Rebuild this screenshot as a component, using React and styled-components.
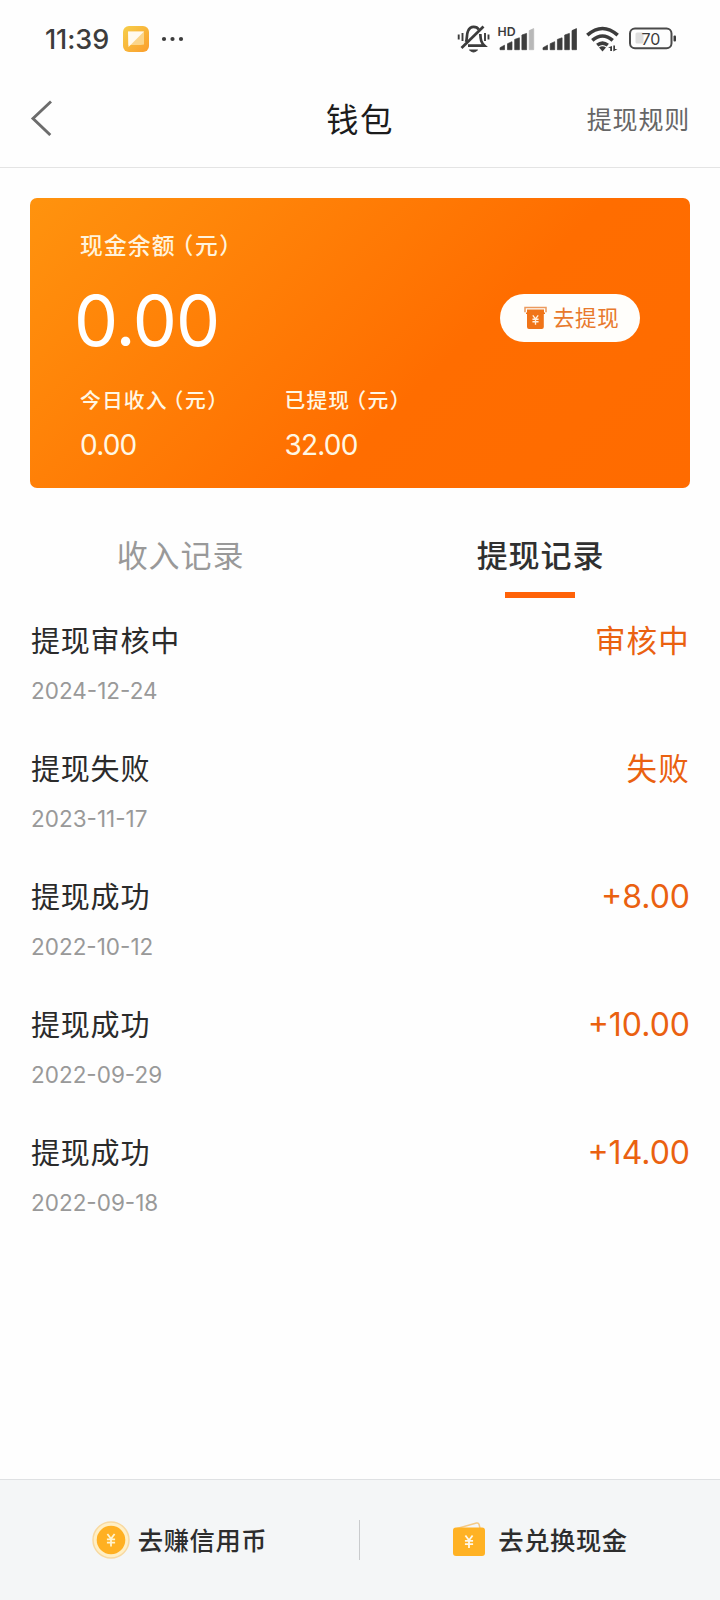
import React from "react";
import styled, { createGlobalStyle } from "styled-components";

const GlobalStyle = createGlobalStyle`
  * { box-sizing: border-box; }
  body {
    margin: 0;
    background: #fefefe;
    font-family: Inter, "Noto Sans CJK SC", sans-serif;
    color: #2b2b2b;
  }
`;

const Screen = styled.main`
  width: 720px;
  height: 1600px;
  display: flex;
  flex-direction: column;
  overflow: hidden;
`;

const StatusBar = styled.div`
  height: 78px;
  padding: 0 43px 0 45px;
  display: flex;
  align-items: center;
  justify-content: space-between;
`;

const StatusGroup = styled.div`
  display: flex;
  align-items: center;
`;

const Time = styled.span`
  width: 78px;
  padding-top: 2px;
  font-size: 27px;
  line-height: 32px;
  font-weight: 500;
  letter-spacing: -0.1px;
  color: #3c3c3c;
`;

const Dots = styled.svg`
  margin-left: 12px;
`;

const Header = styled.header`
  height: 90px;
  padding: 0 30px;
  display: grid;
  grid-template-columns: 1fr auto 1fr;
  align-items: center;
  border-bottom: 1px solid #e4e4e4;
`;

const Title = styled.h1`
  margin: 0 0 4px;
  font-size: 32.5px;
  line-height: 44px;
  font-weight: 400;
  letter-spacing: 1.5px;
  color: #1c1c1c;
`;

const RulesLink = styled.a`
  margin-bottom: 6px;
  justify-self: end;
  font-size: 25px;
  line-height: 36px;
  letter-spacing: 0.8px;
  color: #666;
`;

const BackButton = styled.button`
  margin: 0 0 9px;
  padding: 0;
  border: 0;
  background: none;
  width: 24px;
  height: 36px;
`;

const Card = styled.section`
  margin: 30px 30px 0;
  height: 290px;
  padding: 30px 50px 0;
  border-radius: 7px;
  color: #fff;
  background: linear-gradient(135deg, #ff930e 0%, #ff6d00 61%, #ff6b00 100%);
`;

const CardLabel = styled.div`
  font-size: ${(p) => (p.$small ? 20.8 : 22.8)}px;
  line-height: 36px;
  font-weight: 500;
  letter-spacing: 1.1px;
  color: ${(p) => (p.$small ? "#fff7e4" : "#fff3dc")};
  white-space: nowrap;
`;

const Unit = styled.span`
  margin-left: -5px;
  letter-spacing: 1.5px;
`;

const BalanceRow = styled.div`
  height: 88px;
  margin-top: 6px;
  display: flex;
  align-items: center;
  justify-content: space-between;
`;

const Balance = styled.div`
  margin: 13px 0 0 -6px;
  font-size: 70px;
  line-height: 84px;
  letter-spacing: -1px;
`;

const WithdrawButton = styled.button`
  width: 140px;
  height: 48px;
  margin: 8px 0 0;
  padding: 0 0 0 24px;
  border: 0;
  border-radius: 24px;
  background: #fffefb;
  display: flex;
  align-items: center;
  gap: 6px;
  font: 400 21.5px/32px Inter, "Noto Sans CJK SC", sans-serif;
  letter-spacing: 0.6px;
  color: #e8792c;
`;

const Stats = styled.div`
  display: grid;
  grid-template-columns: 204.5px auto;
  justify-content: start;
  margin-top: 25px;
`;

const StatValue = styled.div`
  font-size: 28px;
  line-height: 34px;
  margin-top: 9px;
  letter-spacing: -0.8px;
  color: #fff7e4;
`;

const Tabs = styled.nav`
  height: 110px;
  padding-top: 45px;
  display: grid;
  grid-template-columns: 1fr 1fr;
`;

const Tab = styled.a`
  display: flex;
  flex-direction: column;
  align-items: center;
  font-size: 31px;
  line-height: 46px;
  letter-spacing: 0.9px;
  font-weight: ${(p) => (p.$active ? 500 : 400)};
  color: ${(p) => (p.$active ? "#303030" : "#999")};

  &::after {
    content: "";
    width: 70px;
    height: 6px;
    margin-top: 13px;
    background: ${(p) => (p.$active ? "#ff6208" : "transparent")};
  }
`;

const TabLabel = styled.span`
  padding-left: 1px;
`;

const Records = styled.ul`
  list-style: none;
  margin: 0;
  padding: 20px 30px 0 31px;
  flex: 1;
`;

const Record = styled.li`
  height: 128px;
  display: flex;
  justify-content: space-between;
`;

const RecordTitle = styled.div`
  padding-top: 2px;
  font-size: 29px;
  line-height: 44px;
  letter-spacing: 0.8px;
`;

const RecordDate = styled.div`
  margin-top: 13px;
  font-size: 22.5px;
  line-height: 28px;
  color: #999;
`;

const Amount = styled.div`
  font-size: ${(p) => (p.$text ? 30.5 : 32)}px;
  line-height: 46px;
  letter-spacing: ${(p) => (p.$text ? 1.2 : 0)}px;
  color: #ea6110;
`;

const Footer = styled.footer`
  height: 121px;
  border-top: 1px solid #dfe1e3;
  background: #f4f6f7;
  display: grid;
  grid-template-columns: 359px 1px 360px;
  align-items: center;
`;

const FooterAction = styled.a`
  display: flex;
  align-items: center;
  justify-content: center;
  gap: ${(p) => p.$gap}px;
  font-size: 25.3px;
  line-height: 38px;
  font-weight: 500;
  letter-spacing: 0.6px;
  color: #2d2d2d;
`;

const FooterLabel = styled.span`
  padding-top: 2px;
`;

const Divider = styled.i`
  width: 1px;
  height: 40px;
  background: #c9cbcd;
`;

const AppIcon = () => (
  <svg width="26" height="26" viewBox="0 0 26 26">
    <defs>
      <linearGradient id="note" x1="0" y1="0" x2="1" y2="1">
        <stop offset="0" stopColor="#f6cf4a" />
        <stop offset="1" stopColor="#fb9d2c" />
      </linearGradient>
    </defs>
    <rect width="26" height="26" rx="6" fill="url(#note)" />
    <path d="M5 5.500h16v13L17.500 19H5z" fill="#fbd58a" />
    <path d="M5 5.500h16L5.500 21z" fill="#fffaf0" />
  </svg>
);

const MoreDots = () => (
  <Dots width="24" height="6" viewBox="0 0 24 6" fill="#3c3c3c">
    <circle cx="3" cy="3" r="2.1" />
    <circle cx="11.500" cy="3" r="2.1" />
    <circle cx="20" cy="3" r="2.1" />
  </Dots>
);

const StatusIcons = () => (
  <svg width="220" height="32" viewBox="457 23 220 32" fill="#3c3c3c">
    <g fill="none" stroke="#3c3c3c" strokeWidth="2.700">
      <path d="M466 42c1.200-3 .6-8 2-11 1.200-2.800 3-4.200 5.600-4.200 2.400 0 4.200 1 5.200 2.800M480.300 34c.3 6 .8 8.500 4.200 11.700H468" />
      <path d="M483.500 26.500L461.500 48" />
      <path d="M469.500 50q4 4 8 0z" fill="#3c3c3c" strokeWidth="1" />
      <path d="M458.700 34.500v5M462.500 33v8M485 33v8M488.500 34.500v5" strokeWidth="1.900" />
    </g>
    <text x="497.500" y="36.300" fontSize="12.300" fontWeight="600" fontFamily="Inter, sans-serif">HD</text>
    <g stroke="#3c3c3c" strokeWidth="0.700" strokeLinejoin="round">
      <path d="M500 49.700v-2l4.500-2.500v4.500zM507.500 49.700v-6l4.500-2v8zM514.700 49.700V39.400l4.700-1.600v11.900zM521.900 49.700V35l4.700-1.600v16.300z" />
      <path d="M529.200 49.700V30.600l4.500-2v21.100z" fill="#b8b8b8" stroke="#b8b8b8" />
      <path d="M543 49.700v-2l4.500-2.500v4.500zM550.200 49.700v-6l4.500-2v8zM557.400 49.700V39.400l4.700-1.600v11.900zM564.700 49.700V35l4.700-1.600v16.300zM572 49.700V30.600l4.500-2v21.100z" />
    </g>
    <g fill="none" stroke="#3c3c3c" strokeWidth="3.600">
      <path d="M587.300 35.200q15.200-13.400 30.400 0" />
      <path d="M592.300 40.400q10.200-8.800 20.400 0" />
      <path d="M597.200 45.200q5.300-4.200 10.600 0" />
    </g>
    <path d="M599 47.500q3.500-2.600 7 0l-3.500 4z" />
    <path d="M608 47.500l4-1.500v5h-1.800v-3zM613.300 45.500h1.700v3.500h2.500l-4.200 2.500z" />
    <rect x="630" y="28.500" width="41.500" height="19.800" rx="5" fill="none" stroke="#4a4a4a" strokeWidth="2" />
    <rect x="635.500" y="32.500" width="8" height="11" rx="1.500" fill="#dedede" />
    <rect x="673.500" y="35.500" width="2.500" height="6" rx="1" />
    <text x="651" y="44.600" textAnchor="middle" fontSize="16" fontFamily="Inter, sans-serif">70</text>
  </svg>
);

const BackIcon = () => (
  <svg width="24" height="36" viewBox="0 0 24 36" fill="none" stroke="#6c6c6c" strokeWidth="2.900">
    <path d="M21 1.500L3 18.500 20.300 35" />
  </svg>
);

const Yen = ({ x, y, s, color }) => (
  <path
    d="M-3-5L0-1 3-5M0-1V5.500M-3.400-.6H3.400M-3.400 2.200H3.400"
    transform={`translate(${x} ${y}) scale(${s})`}
    fill="none"
    stroke={color}
    strokeWidth="1.500"
  />
);

const CashIcon = () => (
  <svg width="23" height="24" viewBox="0 0 23 24">
    <path d="M1 6.300V1.500h21v4.800" fill="none" stroke="#ec9a5e" strokeWidth="1.500" />
    <path d="M3 3.500h17v3h1v1.500h-1.200v13q0 2-2 2H5q-2 0-2-2V8H2V6.500h1z" fill="#f07418" />
    <Yen x={11.500} y={13.800} s={0.9} color="#fff0df" />
  </svg>
);

const CoinIcon = () => (
  <svg width="38" height="38" viewBox="0 0 38 38">
    <circle cx="19" cy="19" r="18" fill="#ffefc5" stroke="#f8d9a0" strokeWidth="1.500" />
    <circle cx="19" cy="19" r="14.300" fill="#ffb022" />
    <Yen x={19} y={19} s={1.200} color="#fff4d0" />
  </svg>
);

const WalletIcon = () => (
  <svg width="34" height="38" viewBox="0 0 34 38">
    <path d="M5 7.500L24.500 2q2-.5 2.500 1.300L28 7" fill="none" stroke="#f5c984" strokeWidth="1.500" />
    <rect x="1" y="6.500" width="32" height="28.500" rx="3" fill="#ffb224" />
    <Yen x={17} y={20.500} s={1.200} color="#fff8e8" />
  </svg>
);

const records = [
  { title: "提现审核中", date: "2024-12-24", amount: "审核中", text: true },
  { title: "提现失败", date: "2023-11-17", amount: "失败", text: true },
  { title: "提现成功", date: "2022-10-12", amount: "+8.00" },
  { title: "提现成功", date: "2022-09-29", amount: "+10.00" },
  { title: "提现成功", date: "2022-09-18", amount: "+14.00" },
];

export default function App() {
  return (
    <Screen>
      <GlobalStyle />
      <StatusBar>
        <StatusGroup>
          <Time>11:39</Time>
          <AppIcon />
          <MoreDots />
        </StatusGroup>
        <StatusIcons />
      </StatusBar>
      <Header>
        <BackButton aria-label="返回"><BackIcon /></BackButton>
        <Title>钱包</Title>
        <RulesLink>提现规则</RulesLink>
      </Header>
      <Card>
        <CardLabel>现金余额<Unit>（元）</Unit></CardLabel>
        <BalanceRow>
          <Balance>0.00</Balance>
          <WithdrawButton><CashIcon />去提现</WithdrawButton>
        </BalanceRow>
        <Stats>
          <div>
            <CardLabel $small>今日收入<Unit>（元）</Unit></CardLabel>
            <StatValue>0.00</StatValue>
          </div>
          <div>
            <CardLabel $small>已提现<Unit>（元）</Unit></CardLabel>
            <StatValue>32.00</StatValue>
          </div>
        </Stats>
      </Card>
      <Tabs>
        <Tab><TabLabel>收入记录</TabLabel></Tab>
        <Tab $active><TabLabel>提现记录</TabLabel></Tab>
      </Tabs>
      <Records>
        {records.map((r) => (
          <Record key={r.date}>
            <div>
              <RecordTitle>{r.title}</RecordTitle>
              <RecordDate>{r.date}</RecordDate>
            </div>
            <Amount $text={r.text}>{r.amount}</Amount>
          </Record>
        ))}
      </Records>
      <Footer>
        <FooterAction $gap={8}><CoinIcon /><FooterLabel>去赚信用币</FooterLabel></FooterAction>
        <Divider />
        <FooterAction $gap={12}><WalletIcon /><FooterLabel>去兑换现金</FooterLabel></FooterAction>
      </Footer>
    </Screen>
  );
}
